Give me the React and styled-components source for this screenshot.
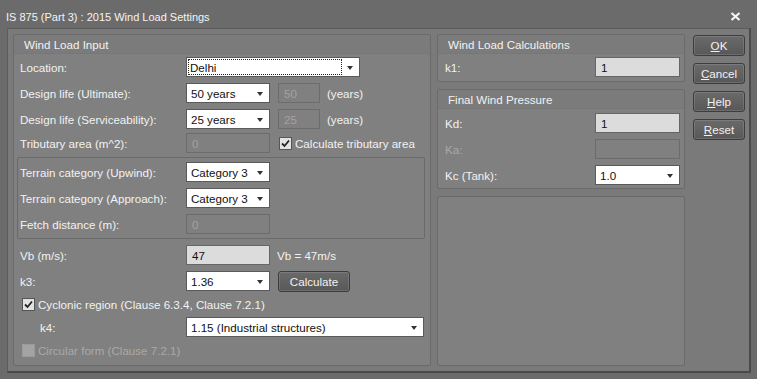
import React from "react";
import styled, { createGlobalStyle } from "styled-components";

const Global = createGlobalStyle`
  html, body { margin: 0; padding: 0; background: #6b6b6b; }
  body { font-family: "Liberation Sans", Arial, sans-serif; font-size: 11.6px; color: #f2f2f2; }
`;

const Window = styled.div`
  width: 757px;
  height: 379px;
  display: flex;
  flex-direction: column;
  background: #6b6b6b;
  box-sizing: border-box;
`;

const TitleBar = styled.div`
  height: 28px;
  flex: none;
  display: flex;
  align-items: center;
  justify-content: space-between;
  padding: 5px 16px 0 6px;
  box-sizing: border-box;
  font-size: 11px;
  color: #f4f4f4;
`;

const Frame = styled.div`
  flex: 1;
  margin: 0 6px 6px 7px;
  border-top: 1px solid #5c5c5c;
  border-left: 1px solid #5c5c5c;
  border-right: 2px solid #4a4a4a;
  border-bottom: 2px solid #4a4a4a;
  background: #7a7a7a;
  padding: 5px 4px 5px 5px;
  display: flex;
  gap: 6px;
  box-sizing: border-box;
`;

const Group = styled.div`
  border: 1px solid #6a6a6a;
  border-radius: 2px;
  background: #808080;
  display: flex;
  flex-direction: column;
  box-sizing: border-box;
  width: ${p => p.$w || "auto"};
  flex: ${p => p.$grow ? 1 : "none"};
`;

const GroupHeader = styled.div`
  height: 18px;
  flex: none;
  display: flex;
  align-items: center;
  padding-left: 10px;
  background: #7b7b7b;
  border-bottom: 1px solid #777;
  color: #f2f2f2;
`;

const GroupBody = styled.div`
  display: flex;
  flex-direction: column;
  padding: ${p => p.$pad || "0 5px 0 3px"};
`;

const Row = styled.div`
  display: flex;
  align-items: center;
  height: 20px;
  margin-top: ${p => p.$mt || 0}px;
  padding-left: ${p => p.$pl ?? 3}px;
  flex: none;
`;

const Label = styled.span`
  width: ${p => p.$w || 166}px;
  flex: none;
  color: ${p => p.$disabled ? "#a9a9a9" : "#f2f2f2"};
  white-space: nowrap;
  padding-left: ${p => p.$indent || 0}px;
  box-sizing: border-box;
`;

const Combo = styled.div`
  position: relative;
  width: ${p => p.$w || 84}px;
  height: 20px;
  background: #fff;
  border: 1px solid #5a5a5a;
  box-sizing: border-box;
  color: #111;
  display: flex;
  align-items: center;
  padding-left: 4px;
  flex: none;
  &::after {
    content: "";
    position: absolute;
    right: 6px;
    top: 8px;
    border-left: 3.5px solid transparent;
    border-right: 3.5px solid transparent;
    border-top: 4px solid #333;
  }
`;

const FocusText = styled.span`
  flex: 1;
  align-self: stretch;
  margin: 1px 17px 1px -3px;
  padding-left: 2px;
  display: flex;
  align-items: center;
  outline: 1px dotted #222;
  outline-offset: -1px;
`;

const Field = styled.div`
  width: ${p => p.$w || 84}px;
  height: 20px;
  flex: none;
  box-sizing: border-box;
  display: flex;
  align-items: center;
  padding-left: 5px;
  border: 1px solid ${p => p.$readonly ? "#666" : "#6c6c6c"};
  background: ${p => p.$readonly ? "#dcdcdc" : "#808080"};
  color: ${p => p.$readonly ? "#111" : "#a2a2a2"};
`;

const Note = styled.span`
  margin-left: ${p => p.$ml || 7}px;
  color: #f2f2f2;
  white-space: nowrap;
`;

const CheckLabel = styled.label`
  display: flex;
  align-items: center;
  gap: 3px;
  margin-left: ${p => p.$ml || 0}px;
  color: ${p => p.$disabled ? "#a9a9a9" : "#f2f2f2"};
  white-space: nowrap;
`;

const Box = styled.span`
  width: 13px;
  height: 13px;
  box-sizing: border-box;
  flex: none;
  border: 1px solid ${p => p.$disabled ? "#9a9a9a" : "#555"};
  background: ${p => p.$disabled ? "#a3a3a3" : "#e2e2e2"};
  display: flex;
  align-items: center;
  justify-content: center;
`;

const Inset = styled.div`
  border: 1px solid #6a6a6a;
  border-radius: 2px;
  margin-top: 4px;
  padding: 4px 0;
  display: flex;
  flex-direction: column;
  gap: 6px;
`;

const Button = styled.button`
  width: ${p => p.$w || 52}px;
  height: 21px;
  flex: none;
  box-sizing: border-box;
  border: 1px solid #3d3d3d;
  border-radius: 3px;
  background: linear-gradient(#6a6a6a, #585858);
  box-shadow: inset 0 0 0 1px rgba(255, 255, 255, 0.12);
  color: #f2f2f2;
  font-family: inherit;
  font-size: inherit;
  padding: 0;
  margin-left: ${p => p.$ml || 0}px;
  u { text-decoration: underline; text-underline-offset: 1px; }
`;

const RightColumn = styled.div`
  width: 248px;
  flex: none;
  display: flex;
  flex-direction: column;
  gap: 7px;
`;

const RightRow = styled.div`
  display: flex;
  align-items: center;
  justify-content: space-between;
  height: 20px;
  margin-top: ${p => p.$mt || 0}px;
  padding: 0 4px 0 7px;
`;

const Buttons = styled.div`
  margin-left: 2px;
  padding-top: 1px;
  display: flex;
  flex-direction: column;
  gap: 7px;
`;

const Check = ({ checked, disabled }) => (
  <Box $disabled={disabled}>
    {checked && (
      <svg width="9" height="9" viewBox="0 0 9 9">
        <path d="M1 4.5 L3.5 7 L8 1.5" fill="none" stroke="#222" strokeWidth="1.8" />
      </svg>
    )}
  </Box>
);

export default function App() {
  return (
    <Window>
      <Global />
      <TitleBar>
        <span>IS 875 (Part 3) : 2015 Wind Load Settings</span>
        <svg width="11" height="9" viewBox="0 0 11 9">
          <path d="M1.5 1 L9.5 8 M9.5 1 L1.5 8" stroke="#f4f4f4" strokeWidth="2.2" />
        </svg>
      </TitleBar>
      <Frame>
        <Group $w="418px">
          <GroupHeader>Wind Load Input</GroupHeader>
          <GroupBody>
            <Row $mt={3}>
              <Label>Location:</Label>
              <Combo $w={174}><FocusText>Delhi</FocusText></Combo>
            </Row>
            <Row $mt={6}>
              <Label>Design life (Ultimate):</Label>
              <Combo>50 years</Combo>
              <Field $w={42} style={{ marginLeft: 8 }}>50</Field>
              <Note>(years)</Note>
            </Row>
            <Row $mt={6}>
              <Label>Design life (Serviceability):</Label>
              <Combo>25 years</Combo>
              <Field $w={42} style={{ marginLeft: 8 }}>25</Field>
              <Note>(years)</Note>
            </Row>
            <Row $mt={4}>
              <Label>Tributary area (m^2):</Label>
              <Field>0</Field>
              <CheckLabel $ml={9}><Check checked />Calculate tributary area</CheckLabel>
            </Row>
            <Inset>
              <Row $pl={2}>
                <Label>Terrain category (Upwind):</Label>
                <Combo>Category 3</Combo>
              </Row>
              <Row $pl={2}>
                <Label>Terrain category (Approach):</Label>
                <Combo>Category 3</Combo>
              </Row>
              <Row $pl={2}>
                <Label>Fetch distance (m):</Label>
                <Field>0</Field>
              </Row>
            </Inset>
            <Row $mt={6}>
              <Label>Vb (m/s):</Label>
              <Field $readonly>47</Field>
              <Note>Vb = 47m/s</Note>
            </Row>
            <Row $mt={6}>
              <Label>k3:</Label>
              <Combo>1.36</Combo>
              <Button $w={72} $ml={8}>Calculate</Button>
            </Row>
            <Row $mt={3} $pl={5}>
              <CheckLabel><Check checked />Cyclonic region (Clause 6.3.4, Clause 7.2.1)</CheckLabel>
            </Row>
            <Row $mt={3}>
              <Label $indent={20}>k4:</Label>
              <Combo $w={238}>1.15 (Industrial structures)</Combo>
            </Row>
            <Row $mt={3} $pl={5}>
              <CheckLabel $disabled><Check disabled />Circular form (Clause 7.2.1)</CheckLabel>
            </Row>
          </GroupBody>
        </Group>
        <RightColumn>
          <Group>
            <GroupHeader>Wind Load Calculations</GroupHeader>
            <GroupBody $pad="3px 0 4px 0">
              <RightRow>
                <span>k1:</span>
                <Field $readonly $w={85}>1</Field>
              </RightRow>
            </GroupBody>
          </Group>
          <Group>
            <GroupHeader>Final Wind Pressure</GroupHeader>
            <GroupBody $pad="4px 0 3px 0">
              <RightRow>
                <span>Kd:</span>
                <Field $readonly $w={85}>1</Field>
              </RightRow>
              <RightRow $mt={6}>
                <Label $w={60} $disabled>Ka:</Label>
                <Field $w={85} />
              </RightRow>
              <RightRow $mt={6}>
                <span>Kc (Tank):</span>
                <Combo $w={85}>1.0</Combo>
              </RightRow>
            </GroupBody>
          </Group>
          <Group $grow />
        </RightColumn>
        <Buttons>
          <Button><u>O</u>K</Button>
          <Button><u>C</u>ancel</Button>
          <Button><u>H</u>elp</Button>
          <Button><u>R</u>eset</Button>
        </Buttons>
      </Frame>
    </Window>
  );
}
